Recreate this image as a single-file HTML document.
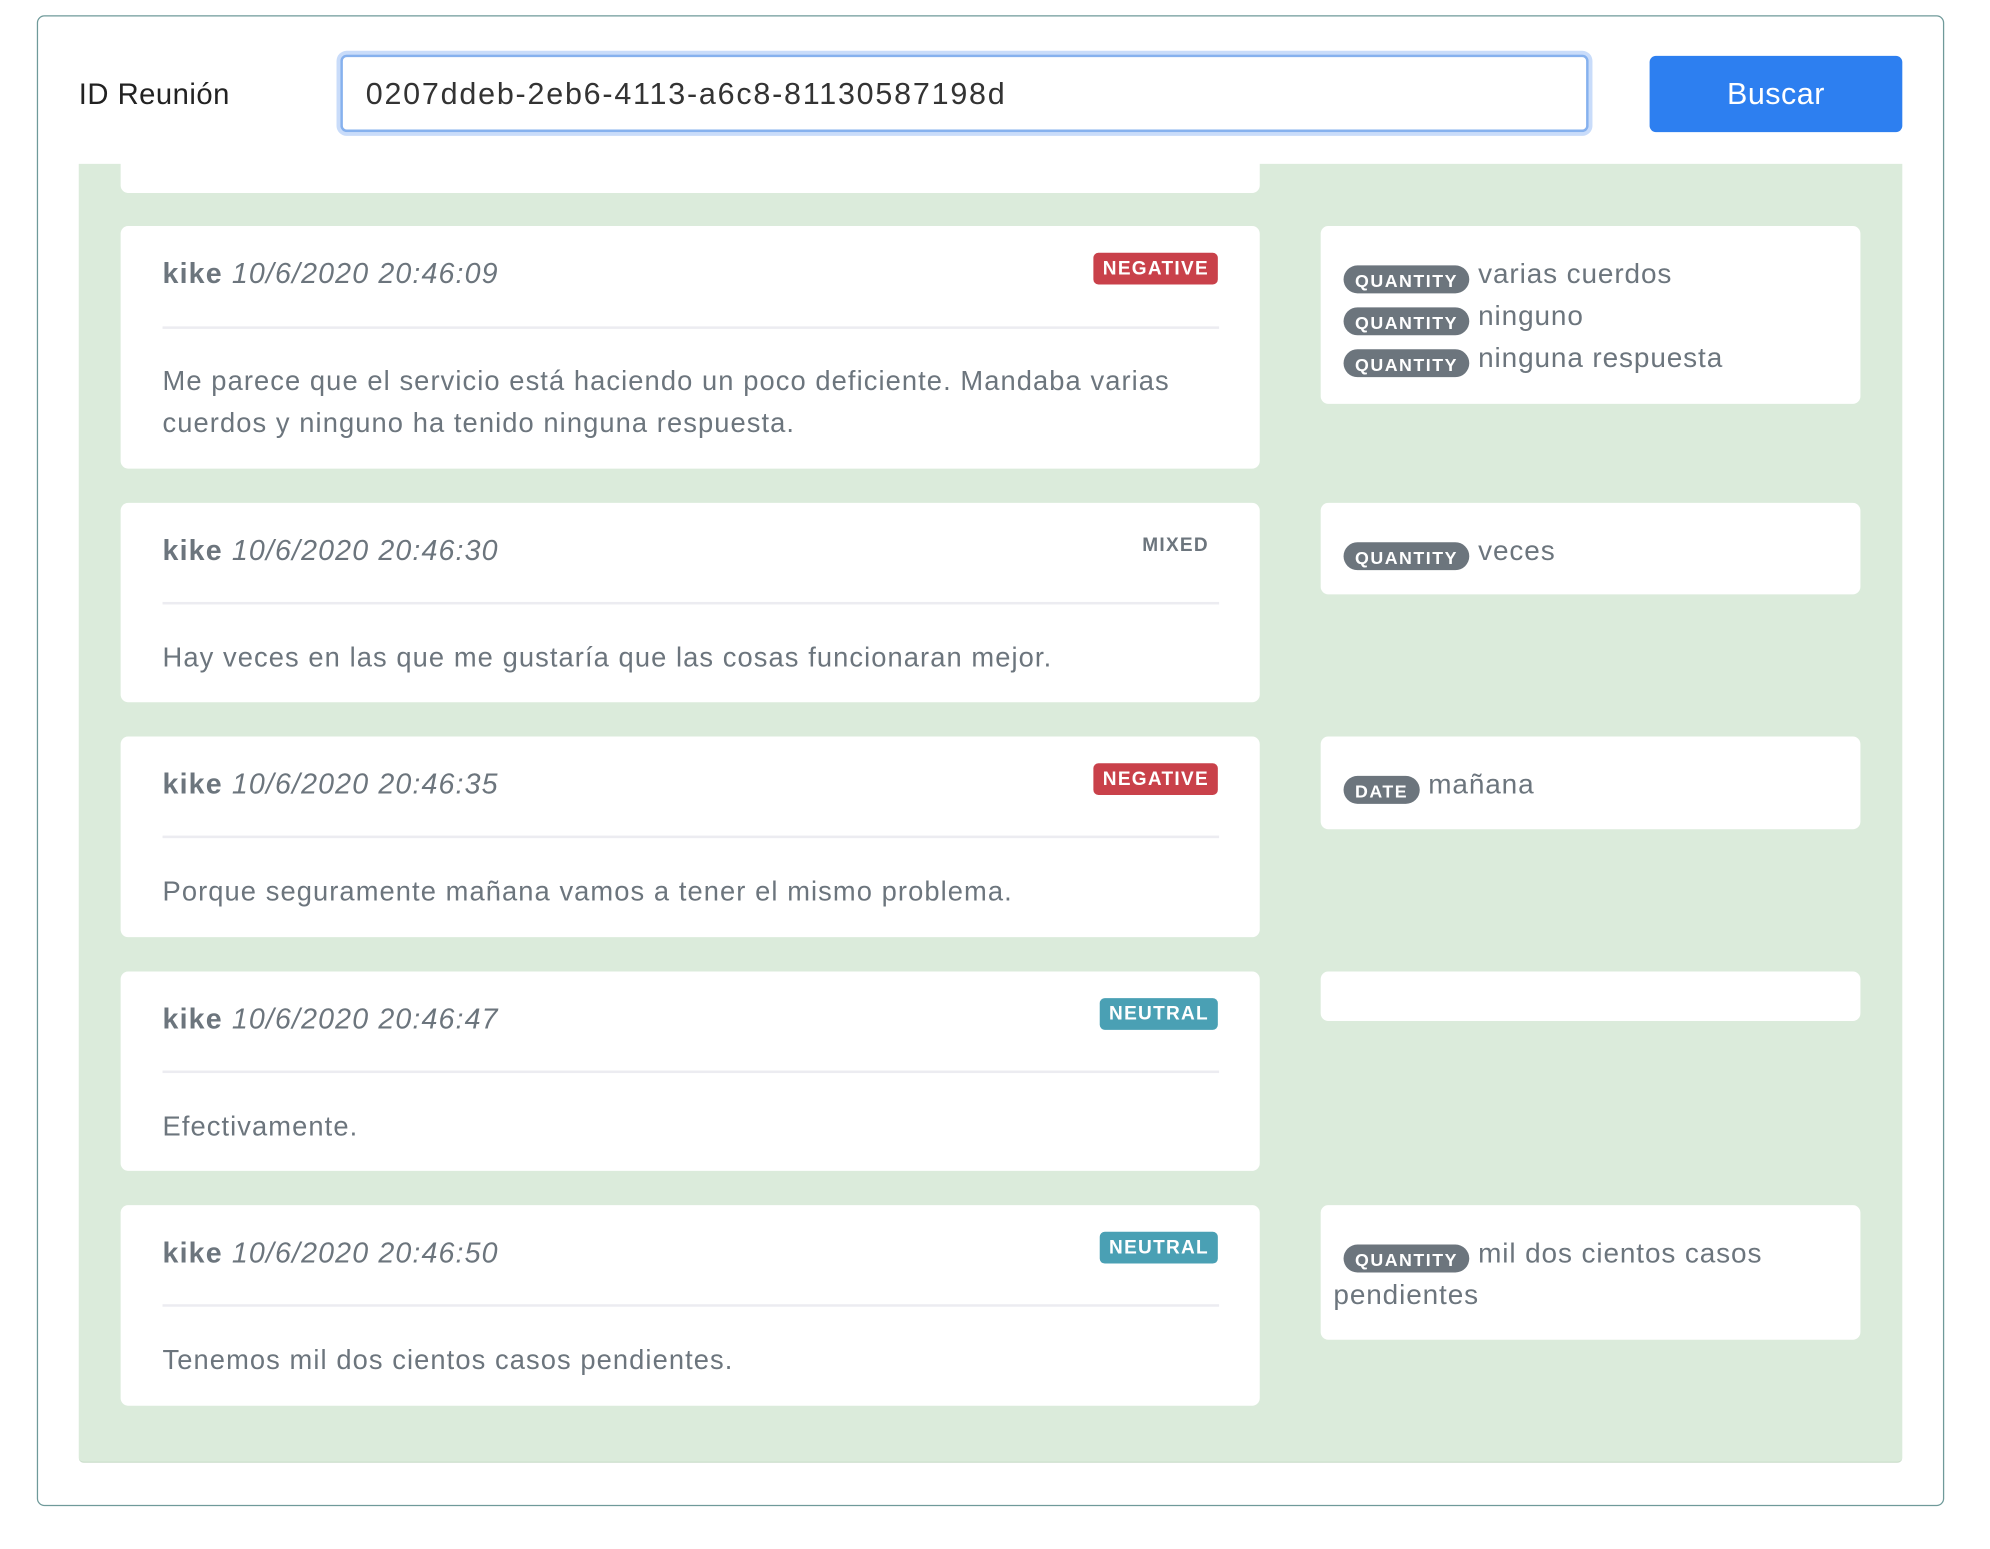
<!DOCTYPE html>
<html><head><meta charset="utf-8"><style>
html,body{margin:0;padding:0;background:#fff;width:1990px;height:1546px;overflow:hidden}
#w{position:absolute;left:0;top:0;width:1570px;height:1220px;transform:scale(1.2699);transform-origin:0 0;font-family:"Liberation Sans",sans-serif;letter-spacing:0.4px}
.outer{position:absolute;left:29px;top:12px;width:1500px;height:1172px;border:1px solid #6f9a9a;border-radius:6px}
.lbl{position:absolute;left:62px;top:61px;font-size:23px;color:#222}
.inp{position:absolute;left:268px;top:43px;width:961px;height:57px;border:2px solid #86b1ee;border-radius:5px;box-shadow:0 0 0 3px #c9dcfa;font-size:24px;letter-spacing:1.4px;color:#333;line-height:59px;padding-left:18px;box-sizing:content-box}
.btn{position:absolute;left:1299px;top:44px;width:199px;height:60px;background:#2d7ff0;border-radius:5px;color:#fff;font-size:24px;line-height:62px;text-align:center}
.panel{position:absolute;left:62px;top:129px;width:1436px;height:1022px;background:#dbebdb;border-bottom:1px solid #c9dcc9;border-radius:0 0 4px 4px}
.card{position:absolute;background:#fff;border-radius:6px;color:#6c757d}
.l{left:33px;width:897px}
.r{left:978px;width:425px;padding:0 10px;box-sizing:border-box;font-size:22px;line-height:33px;letter-spacing:0.7px}
.hd{position:absolute;left:33px;top:25px;font-size:22.5px;letter-spacing:0.9px}
.hd b{font-weight:bold}.hd i{font-style:italic}
.bd{position:absolute;left:33px;top:24px;width:830px;font-size:21.5px;line-height:33px;letter-spacing:0.85px}
.hr{position:absolute;left:33px;width:832px;height:2px;background:#ececf1}
.bg{position:absolute;right:33px;top:21px;font-size:15px;font-weight:bold;color:#fff;border-radius:4px;padding:0 7px;height:25px;line-height:25px;letter-spacing:1px}
.neg{background:#c9414a}.neu{background:#4aa0b4}.mix{color:#6c757d}
.q{display:inline-block;background:#6c757d;color:#fff;font-size:14px;font-weight:bold;letter-spacing:1.2px;border-radius:11px;height:22px;line-height:24px;padding:0 9px;margin-left:8px;vertical-align:-3px}
</style></head><body><div id="w">
<div class="outer"></div>
<div class="lbl">ID Reunión</div>
<div class="inp">0207ddeb-2eb6-4113-a6c8-81130587198d</div>
<div class="btn">Buscar</div>
<div class="panel">
<div class="card l" style="top:-10px;height:33px;border-radius:0 0 6px 6px"></div>

<div class="card l" style="top:49px;height:191px"><div class="hd"><b>kike</b> <i>10/6/2020 20:46:09</i></div><span class="bg neg">NEGATIVE</span><div class="hr" style="top:79px"></div><div class="bd" style="top:106px">Me parece que el servicio está haciendo un poco deficiente. Mandaba varias cuerdos y ninguno ha tenido ninguna respuesta.</div></div>
<div class="card r" style="top:49px;height:140px;padding-top:21px"><span class="q">QUANTITY</span> varias cuerdos<br><span class="q">QUANTITY</span> ninguno<br><span class="q">QUANTITY</span> ninguna respuesta</div>

<div class="card l" style="top:267px;height:157px"><div class="hd"><b>kike</b> <i>10/6/2020 20:46:30</i></div><span class="bg mix">MIXED</span><div class="hr" style="top:78px"></div><div class="bd" style="top:106px">Hay veces en las que me gustaría que las cosas funcionaran mejor.</div></div>
<div class="card r" style="top:267px;height:72px;padding-top:21px"><span class="q">QUANTITY</span> veces</div>

<div class="card l" style="top:451px;height:158px"><div class="hd"><b>kike</b> <i>10/6/2020 20:46:35</i></div><span class="bg neg">NEGATIVE</span><div class="hr" style="top:78px"></div><div class="bd" style="top:106px">Porque seguramente mañana vamos a tener el mismo problema.</div></div>
<div class="card r" style="top:451px;height:73px;padding-top:21px"><span class="q">DATE</span> mañana</div>

<div class="card l" style="top:636px;height:157px"><div class="hd"><b>kike</b> <i>10/6/2020 20:46:47</i></div><span class="bg neu">NEUTRAL</span><div class="hr" style="top:78px"></div><div class="bd" style="top:106px">Efectivamente.</div></div>
<div class="card r" style="top:636px;height:39px"></div>

<div class="card l" style="top:820px;height:158px"><div class="hd"><b>kike</b> <i>10/6/2020 20:46:50</i></div><span class="bg neu">NEUTRAL</span><div class="hr" style="top:78px"></div><div class="bd" style="top:106px">Tenemos mil dos cientos casos pendientes.</div></div>
<div class="card r" style="top:820px;height:106px;padding-top:21px"><span class="q">QUANTITY</span> mil dos cientos casos pendientes</div>
</div>
</div></body></html>
